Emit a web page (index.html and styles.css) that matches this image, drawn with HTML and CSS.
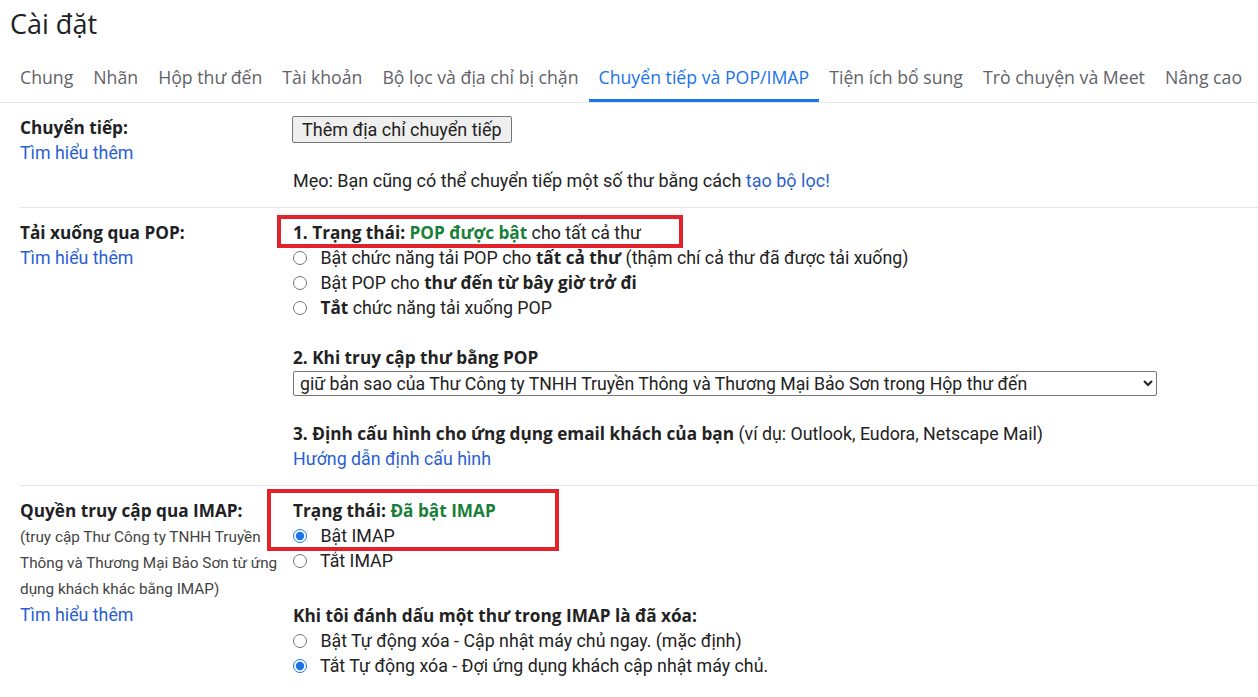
FILE: index.html
```html
<!DOCTYPE html>
<html lang="vi">
<head>
<meta charset="utf-8">
<title>Cài đặt</title>
<link rel="stylesheet" href="styles.css">
</head>
<body>
<div class="page">
  <h1 class="title">Cài đặt</h1>
  <nav class="tabs">
    <span class="tab">Chung</span>
    <span class="tab">Nhãn</span>
    <span class="tab">Hộp thư đến</span>
    <span class="tab">Tài khoản</span>
    <span class="tab">Bộ lọc và địa chỉ bị chặn</span>
    <span class="tab active">Chuyển tiếp và POP/IMAP</span>
    <span class="tab">Tiện ích bổ sung</span>
    <span class="tab">Trò chuyện và Meet</span>
    <span class="tab">Nâng cao</span>
  </nav>

  <section class="sec">
    <div class="left">
      <div class="label">Chuyển tiếp:</div>
      <a class="link" href="#">Tìm hiểu thêm</a>
    </div>
    <div class="right">
      <div class="btnrow"><button class="btn">Thêm địa chỉ chuyển tiếp</button></div>
      <div class="line tip">Mẹo: Bạn cũng có thể chuyển tiếp một số thư bằng cách <a class="link" href="#">tạo bộ lọc!</a></div>
    </div>
  </section>

  <section class="sec">
    <div class="left">
      <div class="label">Tải xuống qua POP:</div>
      <a class="link" href="#">Tìm hiểu thêm</a>
    </div>
    <div class="right">
      <div class="annot">
        <div class="line"><b>1. Trạng thái: <span class="green">POP được bật</span></b> cho tất cả thư</div>
        <div class="redbox box1"></div>
      </div>
      <label class="line radio"><input type="radio" name="pop"> Bật chức năng tải POP cho <b>tất cả thư</b> (thậm chí cả thư đã được tải xuống)</label>
      <label class="line radio"><input type="radio" name="pop"> Bật POP cho <b>thư đến từ bây giờ trở đi</b></label>
      <label class="line radio"><input type="radio" name="pop"> <b>Tắt</b> chức năng tải xuống POP</label>

      <div class="line block"><b>2. Khi truy cập thư bằng POP</b></div>
      <select class="sel">
        <option>giữ bản sao của Thư Công ty TNHH Truyền Thông và Thương Mại Bảo Sơn trong Hộp thư đến</option>
      </select>

      <div class="line block"><b>3. Định cấu hình cho ứng dụng email khách của bạn</b> (ví dụ: Outlook, Eudora, Netscape Mail)</div>
      <a class="line link" href="#">Hướng dẫn định cấu hình</a>
    </div>
  </section>

  <section class="sec last">
    <div class="left">
      <div class="label">Quyền truy cập qua IMAP:</div>
      <div class="desc">(truy cập Thư Công ty TNHH Truyền Thông và Thương Mại Bảo Sơn từ ứng dụng khách khác bằng IMAP)</div>
      <a class="link" href="#">Tìm hiểu thêm</a>
    </div>
    <div class="right">
      <div class="annot">
        <div class="line"><b>Trạng thái: <span class="green">Đã bật IMAP</span></b></div>
        <label class="line radio"><input type="radio" name="imap" checked> Bật IMAP</label>
        <div class="redbox box2"></div>
      </div>
      <label class="line radio"><input type="radio" name="imap"> Tắt IMAP</label>

      <div class="line block2"><b>Khi tôi đánh dấu một thư trong IMAP là đã xóa:</b></div>
      <label class="line radio"><input type="radio" name="del"> Bật Tự động xóa - Cập nhật máy chủ ngay. (mặc định)</label>
      <label class="line radio"><input type="radio" name="del" checked> Tắt Tự động xóa - Đợi ứng dụng khách cập nhật máy chủ.</label>
    </div>
  </section>
</div>
</body>
</html>
```
FILE: styles.css
```css
* { box-sizing: border-box; }
html, body { margin: 0; padding: 0; background: #fff; }
body {
  font-family: Roboto, "Noto Sans", "Liberation Sans", sans-serif;
  font-size: 17.8px;
  color: #222;
  overflow: hidden;
}
.page { width: 1258px; }
.title {
  margin: 0;
  padding: 7px 0 0 10px;
  height: 52px;
  font-family: "Open Sans", Roboto, sans-serif;
  font-weight: 400;
  font-size: 27px;
  line-height: 34px;
  color: #202124;
}
.tabs {
  display: flex;
  height: 51px;
  border-bottom: 1px solid #e6e6e6;
  padding-left: 10px;
}
.tab {
  padding: 0 10px;
  font-family: "Open Sans", Roboto, sans-serif;
  font-size: 17.7px;
  color: #5f6368;
  line-height: 50px;
  border-bottom: 3px solid transparent;
  white-space: nowrap;
}
.tab.active {
  color: #1a73e8;
  border-bottom-color: #1a73e8;
}
b, .label {
  font-family: "Open Sans", Roboto, sans-serif;
  font-weight: 700;
  font-size: 17.2px;
}
.sec {
  display: grid;
  grid-template-columns: 273px 1fr;
  margin-left: 20px;
  padding: 12px 0 14px 0;
  border-bottom: 1px solid #e6e6e6;
  line-height: 25px;
}
.sec.last { border-bottom: none; }
.label { color: #202124; }
.link { color: #2a5fd3; text-decoration: none; display: block; }
.tip .link { display: inline; }
.line { display: block; line-height: 25px; }
.btnrow { height: 25px; margin-bottom: 28px; }
.btn {
  margin: 1px 0 0 -1px;
  height: 27px;
  padding: 0 9px;
  font-family: Roboto, sans-serif;
  font-size: 18px;
  color: #222;
  background: #efefef;
  border: 1px solid #767676;
  border-radius: 2px;
}
.tip { font-size: 18px; }
.green { color: #188038; }
.radio input {
  margin: 0 9px 0 0;
  width: 14px;
  height: 14px;
  vertical-align: -1px;
  accent-color: #1a73e8;
}
.block { margin-top: 25px; }
.block2 { margin-top: 30px; }
.sel {
  display: block;
  width: 864px;
  height: 25px;
  margin: 1px 0 0 0;
  padding: 0 2px;
  font-family: Roboto, sans-serif;
  font-size: 17.7px;
  color: #222;
  background: #fff;
  border: 1px solid #767676;
  border-radius: 2px;
}
.desc {
  font-size: 15.3px;
  line-height: 26px;
  color: #444;
  width: 262px;
  margin-top: 1px;
}
.annot { position: relative; }
.redbox {
  position: absolute;
  border: 4px solid #e3232c;
  pointer-events: none;
}
.box1 { left: -16px; top: -5px; width: 406px; height: 33px; }
.box2 { left: -26px; top: -9px; width: 292px; height: 62px; }
```
